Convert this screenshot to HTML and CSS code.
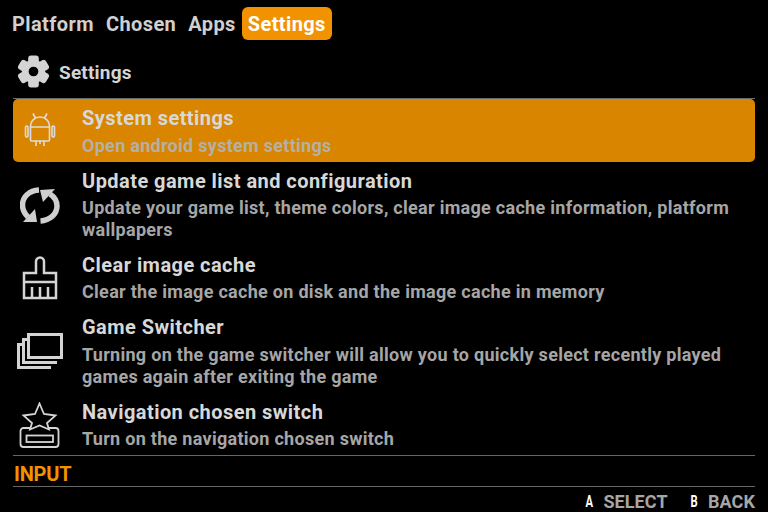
FILE: index.html
```html
<!DOCTYPE html>
<html lang="en">
<head>
<meta charset="utf-8">
<title>Settings</title>
<link rel="stylesheet" href="styles.css">
</head>
<body>
<div class="page">
  <nav class="tabs">
    <span class="tab">Platform</span>
    <span class="tab">Chosen</span>
    <span class="tab">Apps</span>
    <span class="tab active">Settings</span>
  </nav>
  <header class="section">
    <svg class="gear" viewBox="-17 -17 34 34">
      <circle r="8.500" class="gear-ring"/>
      <g class="gear-teeth">
        <rect x="-5.500" y="-16.500" width="11" height="9" rx="3"/>
        <rect x="-5.500" y="-16.500" width="11" height="9" rx="3" transform="rotate(60)"/>
        <rect x="-5.500" y="-16.500" width="11" height="9" rx="3" transform="rotate(120)"/>
        <rect x="-5.500" y="-16.500" width="11" height="9" rx="3" transform="rotate(180)"/>
        <rect x="-5.500" y="-16.500" width="11" height="9" rx="3" transform="rotate(240)"/>
        <rect x="-5.500" y="-16.500" width="11" height="9" rx="3" transform="rotate(300)"/>
      </g>
    </svg>
    <span class="section-title">Settings</span>
  </header>
  <ul class="list">
    <li class="row selected">
      <div class="icon">
        <svg viewBox="0 0 32 36" class="line android"><path d="M9 .5l2.500 4.500M23 .5l-2.500 4.500M6.500 13a9.500 9 0 0 1 19 0v14a1 1 0 0 1-1 1h-17a1 1 0 0 1-1-1zM6.500 14h19M12 28v5M20 28v5M16 28v3"/><rect x="1.500" y="13" width="2.500" height="11" rx="1.200"/><rect x="28" y="13" width="2.500" height="11" rx="1.200"/></svg>
      </div>
      <div class="text">
        <div class="name">System settings</div>
        <div class="desc">Open android system settings</div>
      </div>
    </li>
    <li class="row">
      <div class="icon">
        <svg viewBox="0 0 40 40" class="refresh"><path d="M19 5C9 5.500 2.500 12 2.500 20c0 5 2.500 9 5.500 12M30 9c4.500 3 7 7 7 12 0 8-7 14.500-16.500 15"/><polygon points="3,37 17,37 15,24"/><polygon points="20,5 35,4 23,17"/></svg>
      </div>
      <div class="text">
        <div class="name">Update game list and configuration</div>
        <div class="desc">Update your game list, theme colors, clear image cache information, platform wallpapers</div>
      </div>
    </li>
    <li class="row">
      <div class="icon">
        <svg viewBox="0 0 36 44" class="line brush"><path d="M14 17V5.500a4 4 0 0 1 8 0V17h12v25H2V17zM2 26h32M10 42V31M18 42V31M26 42V31"/></svg>
      </div>
      <div class="text">
        <div class="name">Clear image cache</div>
        <div class="desc">Clear the image cache on disk and the image cache in memory</div>
      </div>
    </li>
    <li class="row">
      <div class="icon">
        <svg viewBox="0 0 46 36" class="line"><rect x="11.500" y="1.500" width="33" height="23"/><path d="M11 6.500H6.500V29.500H40"/><path d="M5 11.500H1.500V34.500H34"/></svg>
      </div>
      <div class="text">
        <div class="name">Game Switcher</div>
        <div class="desc">Turning on the game switcher will allow you to quickly select recently played games again after exiting the game</div>
      </div>
    </li>
    <li class="row">
      <div class="icon">
        <svg viewBox="0 0 42 46" class="line star"><path d="M20.500 1.500 25 12l11.500 1.500L28 21l2 6.500-9.500-4-9.500 4 2-6.500-8.500-7.500L16 12z"/><path d="M12 26H4.500a3 3 0 0 0-3 3v13a3 3 0 0 0 3 3h32a3 3 0 0 0 3-3V29a3 3 0 0 0-3-3H29"/><rect x="7.500" y="33.500" width="26.500" height="6.500"/></svg>
      </div>
      <div class="text">
        <div class="name">Navigation chosen switch</div>
        <div class="desc">Turn on the navigation chosen switch</div>
      </div>
    </li>
  </ul>
  <div class="input-label">INPUT</div>
  <footer class="legend">
    <span class="key">A</span><span class="action">SELECT</span>
    <span class="key key-b">B</span><span class="action">BACK</span>
  </footer>
</div>
</body>
</html>
```
FILE: styles.css
```css
* { box-sizing: border-box; }
html, body { margin: 0; padding: 0; background: #000; }
.page {
  width: 768px;
  height: 512px;
  overflow: hidden;
  display: flex;
  flex-direction: column;
  padding: 7px 13px 0;
  font-family: Roboto, "Liberation Sans", sans-serif;
  font-weight: 700;
}
.page > * { flex: none; }
.tabs { display: flex; height: 33px; margin-left: -7px; align-items: center; }
.tab {
  font-size: 20px;
  color: #d0d0d0;
  padding: 1px 6px 0;
  line-height: 32px;
  letter-spacing: 0.4px;
}
.tab.active { background: #f39200; color: #fff; border-radius: 6px; }
.section {
  height: 59px;
  display: flex;
  align-items: center;
  gap: 9px;
  padding: 7px 0 0 4px;
  border-bottom: 1px solid #6a6a6a;
}
.gear { width: 33px; height: 33px; margin-top: -3px; }
.gear-ring { fill: none; stroke: #d4d4d4; stroke-width: 7; }
.gear-teeth { fill: #d4d4d4; }
.section-title { font-size: 19px; color: #d4d4d4; letter-spacing: 0.2px; }
.list { list-style: none; margin: 0; padding: 0; border-bottom: 1px solid #666; }
.row { display: flex; padding: 7px 0 5.250px; }
.row.selected { background: #d98500; border-radius: 5px; }
.icon { width: 54px; margin-right: 15px; flex: none; display: flex; align-items: center; justify-content: center; }
.icon svg { display: block; }
.row:nth-child(1) .icon svg { width: 32px; height: 36px; }
.row:nth-child(2) .icon svg { width: 40px; height: 40px; }
.row:nth-child(3) .icon svg { width: 36px; height: 44px; }
.row:nth-child(4) .icon svg { width: 46px; height: 36px; }
.row:nth-child(5) .icon svg { width: 42px; height: 46px; }
.line { fill: none; stroke: #d4d4d4; stroke-width: 3; }
.android { stroke-width: 1.600; stroke: #ddd; }
.brush { stroke-width: 2.500; }
.star { stroke-width: 1.800; }
.refresh path { fill: none; stroke: #cfcfcf; stroke-width: 5.500; }
.refresh polygon { fill: #cfcfcf; }
.text { flex: 1; }
.name { font-size: 20px; line-height: 24px; color: #d8d8d8; letter-spacing: 0.45px; }
.desc { font-size: 18px; line-height: 21.750px; margin-top: 4.500px; color: #a6a6a6; letter-spacing: 0.29px; }
.selected .desc { color: #b4b0a6; }
.input-label { color: #f39200; font-size: 20px; line-height: 24px; padding: 6px 0 0 1px; letter-spacing: -0.2px; border-bottom: 1px solid #666; }
.legend { display: flex; justify-content: flex-end; align-items: center; height: 25px; padding-top: 4px; font-size: 18px; }
.key { color: #fff; font-size: 16px; margin-right: 9px; transform: scaleX(0.7); }
.key-b { margin-left: 21px; }
.action { color: #a6a6a6; letter-spacing: 0.1px; }
```
